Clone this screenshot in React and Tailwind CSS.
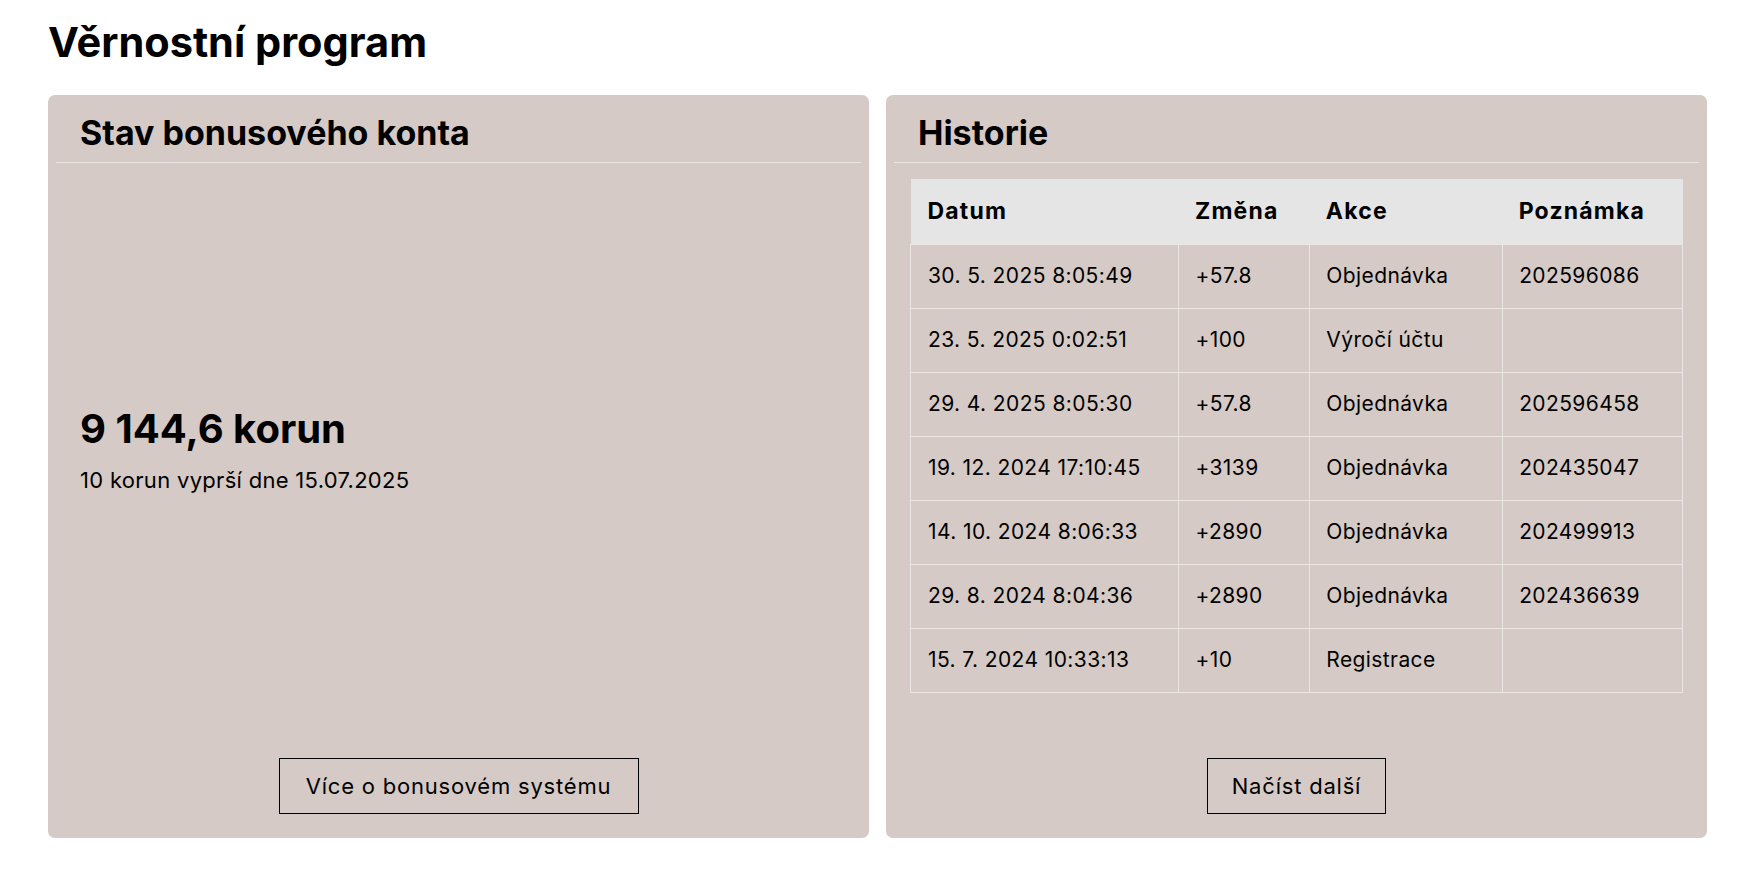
import React from "react";

const rows = [
  ["30. 5. 2025 8:05:49", "+57.8", "Objednávka", "202596086"],
  ["23. 5. 2025 0:02:51", "+100", "Výročí účtu", ""],
  ["29. 4. 2025 8:05:30", "+57.8", "Objednávka", "202596458"],
  ["19. 12. 2024 17:10:45", "+3139", "Objednávka", "202435047"],
  ["14. 10. 2024 8:06:33", "+2890", "Objednávka", "202499913"],
  ["29. 8. 2024 8:04:36", "+2890", "Objednávka", "202436639"],
  ["15. 7. 2024 10:33:13", "+10", "Registrace", ""],
];

function CardHeader({ children }) {
  return (
    <div className="px-2">
      <div className="h-[68px] flex items-center px-6 pt-[8px] border-b border-[#ece6e3]">
        <h2 className="text-[34px] leading-[40px] font-bold text-black">{children}</h2>
      </div>
    </div>
  );
}

export default function App() {
  return (
    <div
      className="min-h-[874px] bg-white text-black pl-[48px] pt-[17px]"
      style={{ fontFamily: "Inter, 'Noto Sans', sans-serif" }}
    >
      <h1 className="text-[41.5px] leading-[50px] font-bold mb-[28px]">
        Věrnostní program
      </h1>
      <div className="w-[1659px] grid grid-cols-2 gap-[17px]">
        <div className="h-[743px] bg-[#d5cac5] rounded-[7px] flex flex-col">
          <CardHeader>Stav bonusového konta</CardHeader>
          <div className="flex-1 flex flex-col justify-center px-8 pb-[23px]">
            <div className="text-[40px] leading-[50px] font-bold">9 144,6 korun</div>
            <div className="text-[22px] leading-[30px] mt-[11px] tracking-[0.3px]">10 korun vyprší dne 15.07.2025</div>
          </div>
          <div className="flex justify-center pb-6">
            <button className="h-[56px] w-[360px] border border-black text-[22px] tracking-[0.8px]">
              Více o bonusovém systému
            </button>
          </div>
        </div>
        <div className="h-[743px] bg-[#d5cac5] rounded-[7px] flex flex-col">
          <CardHeader>Historie</CardHeader>
          <div className="flex-1 px-6 pt-[16px]">
            <table className="w-full border-collapse text-[21px] tracking-[0.4px]">
              <colgroup>
                <col className="w-[269px]" />
                <col className="w-[131px]" />
                <col className="w-[193px]" />
                <col className="w-[180px]" />
              </colgroup>
              <thead>
                <tr className="bg-[#e5e5e5] h-[65px]">
                  <th className="text-left font-bold pl-[17px] text-[23px] tracking-[1.2px]">Datum</th>
                  <th className="text-left font-bold pl-[16px] text-[23px] tracking-[1.2px]">Změna</th>
                  <th className="text-left font-bold pl-[16px] text-[23px] tracking-[1.2px]">Akce</th>
                  <th className="text-left font-bold pl-[16px] text-[23px] tracking-[1.2px]">Poznámka</th>
                </tr>
              </thead>
              <tbody>
                {rows.map((r, i) => (
                  <tr key={i} className="h-[64px]">
                    <td className="border border-[#ebe6e3] pl-[17px]">{r[0]}</td>
                    <td className="border border-[#ebe6e3] pl-[16px]">{r[1]}</td>
                    <td className="border border-[#ebe6e3] pl-[16px]">{r[2]}</td>
                    <td className="border border-[#ebe6e3] pl-[16px]">{r[3]}</td>
                  </tr>
                ))}
              </tbody>
            </table>
          </div>
          <div className="flex justify-center pb-6">
            <button className="h-[56px] w-[179px] border border-black text-[22px] tracking-[0.8px]">
              Načíst další
            </button>
          </div>
        </div>
      </div>
    </div>
  );
}
